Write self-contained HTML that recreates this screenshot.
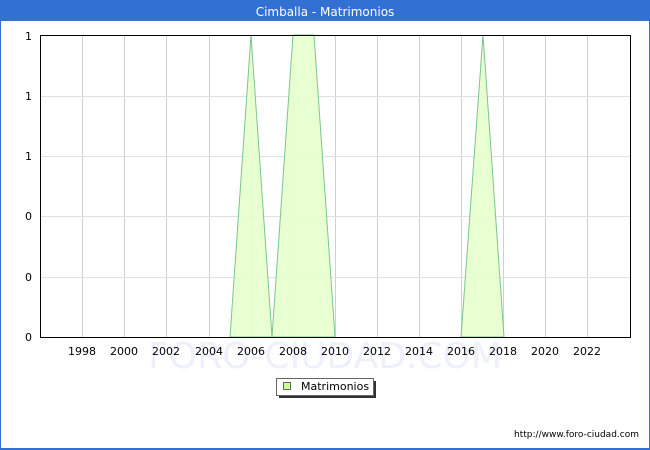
<!DOCTYPE html>
<html><head><style>
html,body{margin:0;padding:0;width:650px;height:450px;overflow:hidden;background:#fff}
svg{display:block;font-family:"DejaVu Sans","Liberation Sans",sans-serif}
</style></head><body>
<svg width="650" height="450" xmlns="http://www.w3.org/2000/svg">
<rect x="0" y="0" width="650" height="450" fill="#3370d4"/>
<rect x="1" y="21" width="648" height="427" fill="#fff"/>
<text x="325" y="16" fill="#fff" font-size="12" text-anchor="middle">Cimballa - Matrimonios</text>
<g stroke="#d0d0d0" stroke-width="1">
<line x1="82.5" y1="35" x2="82.5" y2="337"/><line x1="124.5" y1="35" x2="124.5" y2="337"/>
<line x1="166.5" y1="35" x2="166.5" y2="337"/><line x1="209.5" y1="35" x2="209.5" y2="337"/>
<line x1="251.5" y1="35" x2="251.5" y2="337"/><line x1="293.5" y1="35" x2="293.5" y2="337"/>
<line x1="335.5" y1="35" x2="335.5" y2="337"/><line x1="377.5" y1="35" x2="377.5" y2="337"/>
<line x1="419.5" y1="35" x2="419.5" y2="337"/><line x1="461.5" y1="35" x2="461.5" y2="337"/>
<line x1="503.5" y1="35" x2="503.5" y2="337"/><line x1="545.5" y1="35" x2="545.5" y2="337"/>
<line x1="587.5" y1="35" x2="587.5" y2="337"/>
</g>
<g stroke="#e0e0e0"><line x1="40" y1="96.5" x2="630" y2="96.5"/><line x1="40" y1="156.5" x2="630" y2="156.5"/><line x1="40" y1="216.5" x2="630" y2="216.5"/><line x1="40" y1="277.5" x2="630" y2="277.5"/></g>
<text x="325" y="368" fill="#eef0fb" font-size="36" text-anchor="middle">FORO-CIUDAD.COM</text>
<g fill="#e6ffcc" fill-opacity="0.9" stroke="#7cc48f" stroke-width="1">
<polygon points="230,337 251,35 272,337 293,35 314,35 335,337"/>
<polygon points="461,337 483,35 504,337"/>
</g>
<rect x="40.5" y="35.5" width="590" height="302" fill="none" stroke="#000" stroke-width="1"/>
<g font-size="11" fill="#000" text-anchor="end">
<text x="32" y="40">1</text><text x="32" y="100">1</text><text x="32" y="160">1</text>
<text x="32" y="220">0</text><text x="32" y="281">0</text><text x="32" y="341">0</text>
</g>
<g font-size="11" fill="#000" text-anchor="middle">
<text x="82" y="355">1998</text><text x="124" y="355">2000</text><text x="166" y="355">2002</text>
<text x="209" y="355">2004</text><text x="251" y="355">2006</text><text x="293" y="355">2008</text>
<text x="335" y="355">2010</text><text x="377" y="355">2012</text><text x="419" y="355">2014</text>
<text x="461" y="355">2016</text><text x="503" y="355">2018</text><text x="545" y="355">2020</text>
<text x="587" y="355">2022</text>
</g>
<rect x="279" y="381" width="97" height="17" fill="#333"/>
<rect x="276.5" y="378.5" width="97" height="17" fill="#fff" stroke="#666"/>
<rect x="283.5" y="382.5" width="7" height="7" fill="#ccff99" stroke="#666"/>
<text x="301" y="390" font-size="11">Matrimonios</text>
<text x="639" y="437" font-size="9" text-anchor="end">http://www.foro-ciudad.com</text>
</svg>
</body></html>
